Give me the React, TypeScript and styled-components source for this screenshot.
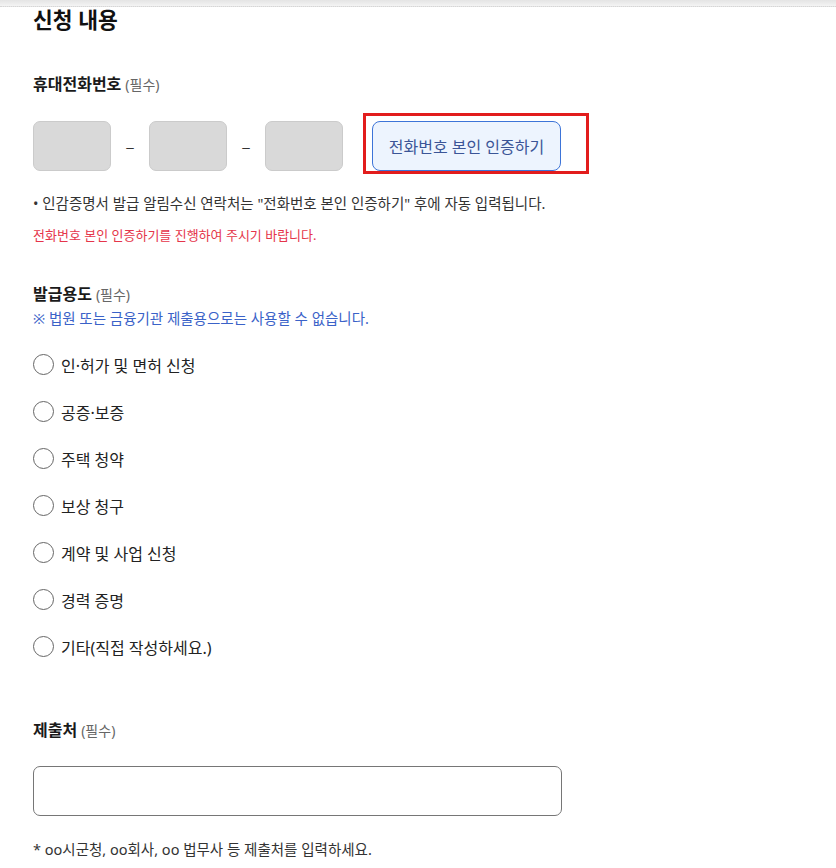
import React from 'react';
import styled, { createGlobalStyle } from 'styled-components';

const GlobalStyle = createGlobalStyle`
  html, body {
    margin: 0;
    padding: 0;
    background: #fff;
  }
  body {
    font-family: 'Noto Sans', 'Noto Sans CJK KR', sans-serif;
    color: #222;
  }
`;

const TopShade = styled.div`
  height: 6px;
  background: linear-gradient(#e4e4e4, #f4f4f4);
  border-bottom: 1px dotted #d6d6d6;
`;

const Page = styled.div`
  padding: 0 0 0 33px;
  display: flex;
  flex-direction: column;
`;

const Title = styled.h2`
  margin: 0;
  font-size: 21.5px;
  line-height: 26px;
  font-weight: 700;
  color: #111;
`;

const Label = styled.div<{ gap: number }>`
  margin-top: ${({ gap }) => gap}px;
  font-size: 16px;
  line-height: 22px;
  font-weight: 700;
  color: #1a1a1a;
`;

const Required = styled.span`
  font-size: 14px;
  font-weight: 400;
  color: #666;
  margin-left: 4px;
`;

const PhoneRow = styled.div`
  margin-top: 25px;
  display: flex;
  align-items: center;
  height: 50px;
`;

const PhoneBox = styled.div`
  width: 78px;
  height: 50px;
  box-sizing: border-box;
  background: #d9d9d9;
  border: 1px solid #cbcbcb;
  border-radius: 7px;
`;

const Dash = styled.span`
  width: 38px;
  text-align: center;
  font-size: 18px;
  font-weight: 300;
  color: #333;
`;

const VerifyWrap = styled.div`
  position: relative;
  margin-left: 29px;
`;

const VerifyButton = styled.button`
  width: 189px;
  height: 50px;
  box-sizing: border-box;
  background: #edf4fe;
  border: 1px solid #3d74d8;
  border-radius: 8px;
  font-family: inherit;
  font-size: 16px;
  color: #3b5597;
  cursor: pointer;
`;

const Highlight = styled.div`
  position: absolute;
  left: -9px;
  top: -8px;
  width: 226px;
  height: 61px;
  box-sizing: border-box;
  border: 3px solid #e21d1d;
  pointer-events: none;
`;

const Note = styled.p<{ gap: number }>`
  margin: ${({ gap }) => gap}px 0 0;
  font-size: 14.5px;
  line-height: 20px;
  color: #333;
`;

const Warning = styled.p`
  margin: 13px 0 0;
  font-size: 13px;
  line-height: 18px;
  color: #e5354a;
`;

const Info = styled.p`
  margin: 2px 0 0;
  font-size: 14.5px;
  line-height: 20px;
  color: #3a62c8;
`;

const RadioList = styled.div`
  margin-top: 13px;
  display: flex;
  flex-direction: column;
`;

const RadioRow = styled.label`
  display: flex;
  align-items: center;
  height: 47px;
  cursor: pointer;
`;

const Circle = styled.span`
  width: 21px;
  height: 21px;
  box-sizing: border-box;
  border: 1.3px solid #666;
  border-radius: 50%;
  background: #fff;
  flex-shrink: 0;
`;

const RadioText = styled.span`
  margin-left: 7px;
  font-size: 16px;
  color: #222;
`;

const TextInput = styled.input`
  margin-top: 24px;
  width: 529px;
  height: 50px;
  box-sizing: border-box;
  border: 1px solid #767676;
  border-radius: 7px;
  padding: 0 12px;
  font-family: inherit;
  font-size: 15px;
  outline: none;
`;

const purposes = [
  '인·허가 및 면허 신청',
  '공증·보증',
  '주택 청약',
  '보상 청구',
  '계약 및 사업 신청',
  '경력 증명',
  '기타(직접 작성하세요.)',
];

export default function App() {
  return (
    <>
      <GlobalStyle />
      <TopShade />
      <Page>
        <Title>신청 내용</Title>

        <Label gap={40}>
          휴대전화번호<Required>(필수)</Required>
        </Label>
        <PhoneRow>
          <PhoneBox />
          <Dash>–</Dash>
          <PhoneBox />
          <Dash>–</Dash>
          <PhoneBox />
          <VerifyWrap>
            <VerifyButton>전화번호 본인 인증하기</VerifyButton>
            <Highlight />
          </VerifyWrap>
        </PhoneRow>
        <Note gap={22}>• 인감증명서 발급 알림수신 연락처는 "전화번호 본인 인증하기" 후에 자동 입력됩니다.</Note>
        <Warning>전화번호 본인 인증하기를 진행하여 주시기 바랍니다.</Warning>

        <Label gap={39}>
          발급용도<Required>(필수)</Required>
        </Label>
        <Info>※ 법원 또는 금융기관 제출용으로는 사용할 수 없습니다.</Info>
        <RadioList>
          {purposes.map((p) => (
            <RadioRow key={p}>
              <Circle />
              <RadioText>{p}</RadioText>
            </RadioRow>
          ))}
        </RadioList>

        <Label gap={49}>
          제출처<Required>(필수)</Required>
        </Label>
        <TextInput type="text" />
        <Note gap={23}>* oo시군청, oo회사, oo 법무사 등 제출처를 입력하세요.</Note>
      </Page>
    </>
  );
}
